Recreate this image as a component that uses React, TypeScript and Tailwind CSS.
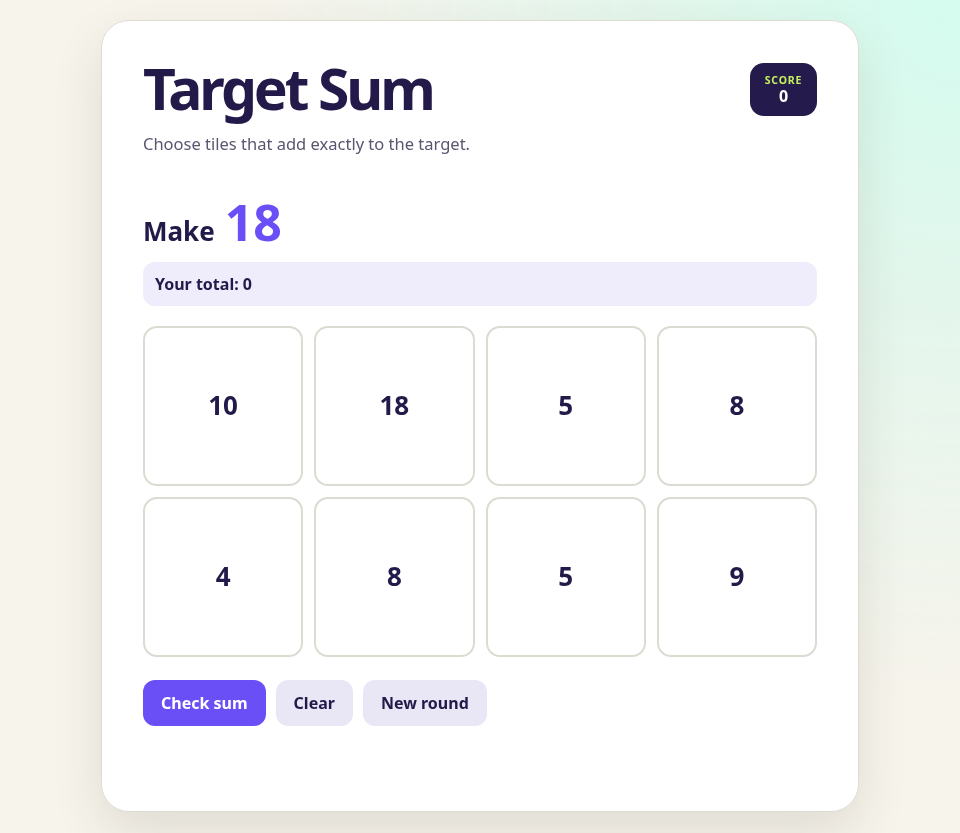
import { useState } from 'react'

const tiles = [10, 18, 5, 8, 4, 8, 5, 9]

export default function App() {
  const [picked, setPicked] = useState<number[]>([])
  const [score, setScore] = useState(0)
  const total = picked.reduce((s, i) => s + tiles[i], 0)

  const toggle = (i: number) => {
    setPicked(p => (p.includes(i) ? p.filter(x => x !== i) : [...p, i]))
  }

  const checkSum = () => {
    if (total === 18) setScore(s => s + 1)
  }

  return (
    <div
      className="min-h-screen w-full flex justify-center py-5 bg-[#f7f4ec]"
      style={{ fontFamily: '"Noto Sans", "Open Sans", sans-serif' }}
    >
      <div className="fixed inset-0 bg-[radial-gradient(circle_at_100%_0%,#d4fcef_0%,#e4f6ec_25%,rgba(247,244,236,0)_55%)] pointer-events-none" />
      <div className="relative w-[758px] h-[792px] bg-white rounded-[28px] border border-[#dedbd3] shadow-[0_20px_50px_rgba(60,50,30,0.12)] px-[41px] pt-[36px]">
        {/* Header */}
        <div className="flex justify-between items-start">
          <div>
            <h1 className="text-[57px] leading-[1.12] font-bold tracking-[-0.055em] text-[#231a4a]">
              Target Sum
            </h1>
            <p className="mt-[11px] text-[16.5px] leading-[1.5] text-[#5b5670]">
              Choose tiles that add exactly to the target.
            </p>
          </div>
          <div className="mt-[6px] w-[67px] h-[53px] rounded-[14px] bg-[#241a4c] flex flex-col items-center justify-center">
            <span className="text-[10.5px] leading-none font-bold tracking-[0.08em] text-[#c5f25c]">SCORE</span>
            <span className="mt-[3px] text-[16px] leading-none font-bold text-white">{score}</span>
          </div>
        </div>

        {/* Target */}
        <div className="mt-[38px] flex items-baseline gap-[10px] text-[#231a4a]">
          <span className="text-[26px] font-bold">Make</span>
          <span className="text-[50px] leading-[1.1] font-bold text-[#6a4ff7]">18</span>
        </div>

        <div className="mt-[11px] h-[44px] rounded-[12px] bg-[#efecfc] px-[12px] flex items-center text-[16px] font-bold text-[#231a4a]">
          Your total: {total}
        </div>

        {/* Tiles */}
        <div className="mt-[20px] grid grid-cols-4 gap-[11px]">
          {tiles.map((n, i) => (
            <button
              key={i}
              onClick={() => toggle(i)}
              className={
                'h-[160px] rounded-[14px] border-2 flex items-center justify-center text-[26px] font-bold text-[#231a4a] ' +
                (picked.includes(i) ? 'border-[#6a4ff7] bg-[#f3f0ff]' : 'border-[#dcdbd2] bg-white')
              }
            >
              {n}
            </button>
          ))}
        </div>

        {/* Actions */}
        <div className="mt-[23px] flex gap-[10px]">
          <button
            onClick={checkSum}
            className="h-[46px] px-[18px] rounded-[12px] bg-[#6a4ff7] text-white text-[16px] font-bold"
          >
            Check sum
          </button>
          <button
            onClick={() => setPicked([])}
            className="h-[46px] px-[18px] rounded-[12px] bg-[#e9e6f5] text-[#231a4a] text-[16px] font-bold"
          >
            Clear
          </button>
          <button
            onClick={() => setPicked([])}
            className="h-[46px] px-[18px] rounded-[12px] bg-[#e9e6f5] text-[#231a4a] text-[16px] font-bold"
          >
            New round
          </button>
        </div>
      </div>
    </div>
  )
}
